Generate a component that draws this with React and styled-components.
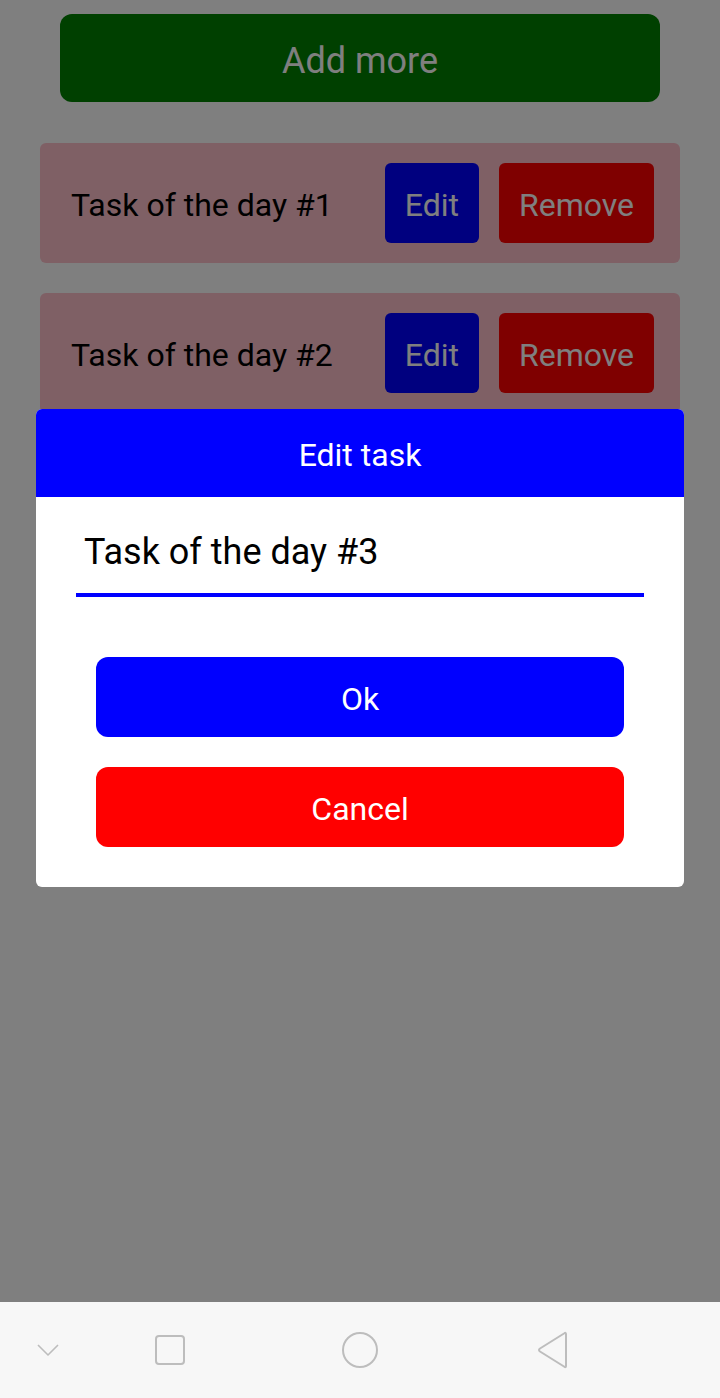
import React, { useState } from "react";
import styled, { createGlobalStyle } from "styled-components";

const GlobalStyle = createGlobalStyle`
  html, body {
    margin: 0;
    padding: 0;
    background: #fff;
  }
  * {
    box-sizing: border-box;
  }
`;

const tasks = ["Task of the day #1", "Task of the day #2", "Task of the day #3"];

export default function App() {
  const [value, setValue] = useState(tasks[2]);

  return (
    <>
      <GlobalStyle />
      <SCREEN>
        <CONTENT>
          <ADDBUTTON>Add more</ADDBUTTON>
          <LIST>
            {tasks.map((t) => (
              <TASKCARD key={t}>
                <TASKTEXT>{t}</TASKTEXT>
                <ACTIONS>
                  <SMALLBUTTON $bg="#0000ff">Edit</SMALLBUTTON>
                  <SMALLBUTTON $bg="#ff0000">Remove</SMALLBUTTON>
                </ACTIONS>
              </TASKCARD>
            ))}
          </LIST>

          <BACKDROP>
            <MODAL>
              <MODALHEADER>Edit task</MODALHEADER>
              <MODALBODY>
                <INPUT value={value} onChange={(e) => setValue(e.target.value)} />
                <MODALBUTTONS>
                  <WIDEBUTTON $bg="#0000ff">Ok</WIDEBUTTON>
                  <WIDEBUTTON $bg="#ff0000">Cancel</WIDEBUTTON>
                </MODALBUTTONS>
              </MODALBODY>
            </MODAL>
          </BACKDROP>
        </CONTENT>

        <NAVBAR>
          <NAVSLOT>
            <svg width="24" height="16" viewBox="0 0 24 16">
              <polyline points="2,3 12,13 22,3" fill="none" stroke="#bdbdbd" strokeWidth="1.6" strokeLinejoin="round" />
            </svg>
          </NAVSLOT>
          <NAVSLOT>
            <svg width="32" height="32" viewBox="0 0 32 32">
              <rect x="2" y="2" width="28" height="28" rx="3" fill="none" stroke="#bdbdbd" strokeWidth="2" />
            </svg>
          </NAVSLOT>
          <NAVSLOT>
            <svg width="38" height="38" viewBox="0 0 38 38">
              <circle cx="19" cy="19" r="17" fill="none" stroke="#bdbdbd" strokeWidth="2" />
            </svg>
          </NAVSLOT>
          <NAVSLOT>
            <svg width="34" height="38" viewBox="0 0 34 38">
              <path d="M30 3 L30 35 Q30 37 28 35.5 L4 20.5 Q2 19 4 17.5 L28 2.5 Q30 1 30 3 Z" fill="none" stroke="#bdbdbd" strokeWidth="2" strokeLinejoin="round" />
            </svg>
          </NAVSLOT>
        </NAVBAR>
      </SCREEN>
    </>
  );
}

export const SCREEN = styled.div`
  width: 720px;
  height: 1398px;
  display: flex;
  flex-direction: column;
  font-family: Roboto, "Liberation Sans", sans-serif;
  overflow: hidden;
`;

export const CONTENT = styled.div`
  position: relative;
  flex: 1;
  display: flex;
  flex-direction: column;
  align-items: center;
  padding-top: 14px;
`;

export const ADDBUTTON = styled.button`
  width: 600px;
  height: 88px;
  padding: 5px 0 0;
  border: none;
  border-radius: 12px;
  background: #008000;
  color: #fff;
  font-family: inherit;
  font-size: 36px;
`;

export const LIST = styled.div`
  width: 640px;
  margin-top: 41px;
  display: flex;
  flex-direction: column;
  gap: 30px;
`;

export const TASKCARD = styled.div`
  height: 120px;
  display: flex;
  align-items: center;
  justify-content: space-between;
  padding: 4px 26px 0 31px;
  background: #ffc0cb;
  border-radius: 6px;
`;

export const TASKTEXT = styled.span`
  font-size: 32px;
  color: #000;
`;

export const ACTIONS = styled.div`
  display: flex;
  gap: 20px;
  margin-top: -4px;
`;

export const SMALLBUTTON = styled.button`
  height: 80px;
  padding: 4px 20px 0;
  border: none;
  border-radius: 6px;
  background: ${(p) => p.$bg};
  color: #fff;
  font-family: inherit;
  font-size: 32px;
`;

export const BACKDROP = styled.div`
  position: absolute;
  inset: 0;
  background: rgba(0, 0, 0, 0.5);
  display: flex;
  align-items: center;
  justify-content: center;
  padding-bottom: 6px;
`;

export const MODAL = styled.div`
  width: 648px;
  background: #fff;
  border-radius: 6px;
  overflow: hidden;
`;

export const MODALHEADER = styled.div`
  height: 88px;
  padding-top: 4px;
  display: flex;
  align-items: center;
  justify-content: center;
  background: #0000ff;
  color: #fff;
  font-size: 32px;
`;

export const MODALBODY = styled.div`
  padding: 20px 40px 40px;
`;

export const INPUT = styled.input`
  display: block;
  width: 100%;
  height: 80px;
  padding: 0 8px 6px;
  border: none;
  border-bottom: 4px solid #0000ff;
  outline: none;
  font-family: Roboto, "Liberation Sans", sans-serif;
  font-size: 36px;
  color: #000;
  background: transparent;
`;

export const MODALBUTTONS = styled.div`
  margin-top: 60px;
  padding: 0 20px;
  display: flex;
  flex-direction: column;
  gap: 30px;
`;

export const WIDEBUTTON = styled.button`
  height: 80px;
  padding: 4px 0 0;
  border: none;
  border-radius: 12px;
  background: ${(p) => p.$bg};
  color: #fff;
  font-family: inherit;
  font-size: 32px;
`;

export const NAVBAR = styled.div`
  height: 96px;
  flex-shrink: 0;
  display: grid;
  grid-template-columns: 96px 148px 232px 154px;
  align-items: center;
  background: #f7f7f7;
`;

export const NAVSLOT = styled.div`
  display: flex;
  align-items: center;
  justify-content: center;
`;
